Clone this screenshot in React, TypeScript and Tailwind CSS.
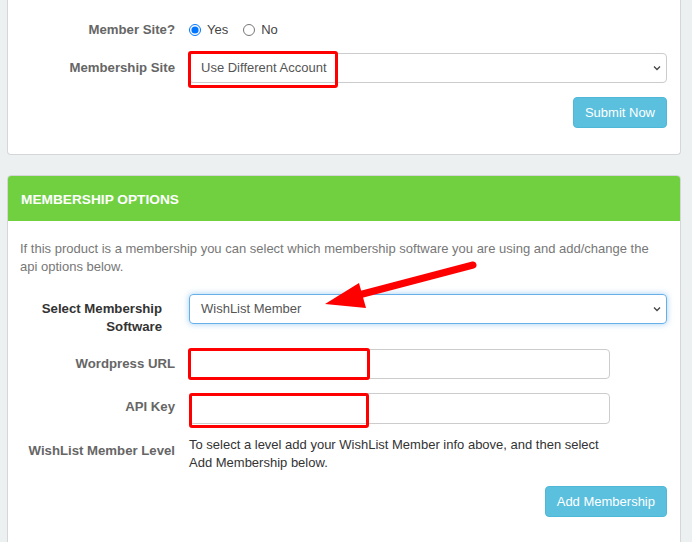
import React from "react";

const Chevron = () => (
  <svg width="10" height="10" viewBox="0 0 10 10" className="absolute right-[4px] top-1/2 -translate-y-1/2">
    <path d="M2 3.5 L5 6.5 L8 3.5" fill="none" stroke="#444" strokeWidth="1.3" />
  </svg>
);

const RedBox = ({ className }: { className: string }) => (
  <div className={"pointer-events-none absolute border-[3px] border-[#ff0000] rounded-[3px] " + className} />
);

export default function App() {
  return (
    <div
      className="relative w-[692px] h-[542px] overflow-hidden bg-[#ecf0f1] text-[13px]"
      style={{ fontFamily: '"Liberation Sans", Arial, sans-serif' }}
    >
      {/* First card */}
      <div className="ml-[7px] w-[674px] bg-white border-x border-b border-[#d4d6d8] rounded-b-[4px] pl-[12px] pr-[13px] pt-[20px] pb-[26px]">
        <div className="flex items-center h-[20px]">
          <div className="w-[155px] text-right font-bold text-[#666] text-[13.2px]">Member Site?</div>
          <div className="ml-[14px] flex items-center text-[#444] text-[13px]">
            <input type="radio" name="ms" defaultChecked className="m-0 w-[12px] h-[12px] accent-[#0075ff]" />
            <span className="ml-[6px]">Yes</span>
            <input type="radio" name="ms" className="ml-[15px] m-0 w-[12px] h-[12px]" />
            <span className="ml-[6px]">No</span>
          </div>
        </div>
        <div className="mt-[13px] flex items-center">
          <div className="w-[155px] text-right font-bold text-[#666] text-[13.2px]">Membership Site</div>
          <div className="relative ml-[14px] flex-1 h-[30px] border border-[#cccccc] rounded-[4px] flex items-center pl-[11px] text-[#555]">
            Use Different Account
            <Chevron />
            <RedBox className="left-[-2px] top-[-3px] w-[150px] h-[37px]" />
          </div>
        </div>
        <div className="mt-[14px] flex justify-end">
          <div className="h-[31px] px-[11px] flex items-center bg-[#5bc0de] border border-[#4fb8d8] rounded-[4px] text-white text-[13px]">
            Submit Now
          </div>
        </div>
      </div>

      {/* Second card */}
      <div className="mt-[20px] ml-[7px] w-[674px] bg-white border border-[#d4d6d8] rounded-t-[4px] h-[400px]">
        <div className="h-[45px] bg-[#70d040] rounded-t-[3px] flex items-center pl-[13px] pt-[3px] text-white font-bold text-[13.7px]">
          MEMBERSHIP OPTIONS
        </div>
        <div className="pl-[12px] pr-[13px] pt-[19px]">
          <p className="text-[#777] leading-[18px]">
            If this product is a membership you can select which membership software you are using and add/change the api options below.
          </p>
          <div className="mt-[18px] flex items-start">
            <div className="w-[155px] pr-[13px] text-right font-bold text-[#333] text-[13.2px] leading-[18px] pt-[6px]">
              Select Membership Software
            </div>
            <div className="relative ml-[14px] flex-1 h-[30px] border border-[#66afe9] rounded-[4px] flex items-center pl-[11px] text-[#555] shadow-[0_0_6px_rgba(102,175,233,0.6)]">
              WishList Member
              <Chevron />
            </div>
          </div>
          <div className="mt-[13px] flex items-center">
            <div className="w-[155px] text-right font-bold text-[#666] text-[13.2px]">Wordpress URL</div>
            <div className="relative ml-[14px] w-[421px] h-[30px] border border-[#cccccc] rounded-[4px]">
              <RedBox className="left-[-2px] top-[-2px] w-[182px] h-[32px]" />
            </div>
          </div>
          <div className="mt-[14px] flex items-center">
            <div className="w-[155px] text-right font-bold text-[#666] text-[13.2px] pb-[3px]">API Key</div>
            <div className="relative ml-[14px] w-[421px] h-[31px] border border-[#cccccc] rounded-[4px]">
              <RedBox className="left-[-1px] top-[-1px] w-[180px] h-[35px]" />
            </div>
          </div>
          <div className="mt-[12px] flex items-start">
            <div className="w-[155px] text-right font-bold text-[#666] text-[13.2px] pt-[6px] leading-[18px]">WishList Member Level</div>
            <div className="ml-[14px] w-[430px] text-[#333] leading-[18px]">
              To select a level add your WishList Member info above, and then select Add Membership below.
            </div>
          </div>
          <div className="mt-[14px] flex justify-end">
            <div className="h-[31px] px-[11px] flex items-center bg-[#5bc0de] border border-[#4fb8d8] rounded-[4px] text-white text-[13px]">
              Add Membership
            </div>
          </div>
        </div>
      </div>

      {/* Red arrow annotation */}
      <svg className="pointer-events-none absolute left-0 top-0" width="692" height="542" viewBox="0 0 692 542">
        <line x1="473" y1="265" x2="355" y2="296" stroke="#ff0000" strokeWidth="7" strokeLinecap="round" />
        <polygon points="325,304 359,283 366,308" fill="#ff0000" />
      </svg>
    </div>
  );
}
